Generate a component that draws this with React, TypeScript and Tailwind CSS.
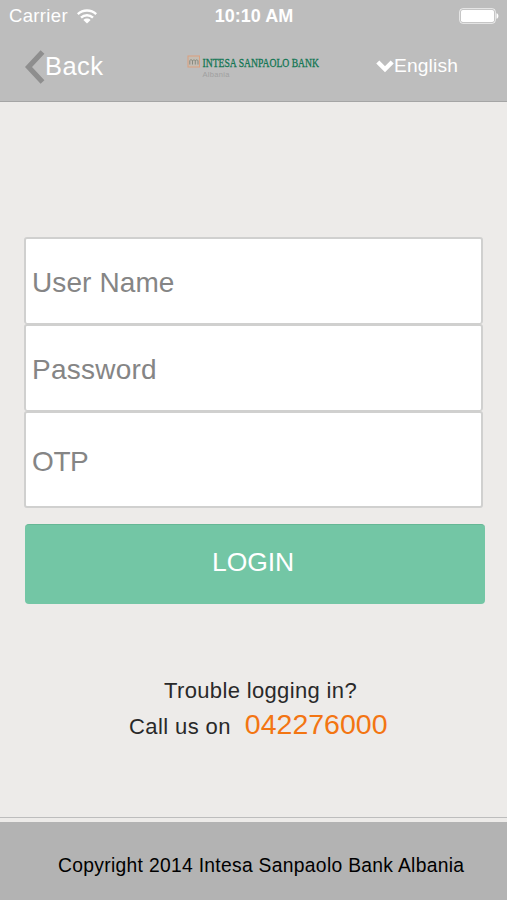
import React from 'react';

interface FieldProps {
    label: string;
    type?: string;
    className: string;
}

const Field: React.FC<FieldProps> = ({ label, type = 'text', className }) => (
    <input
        type={type}
        placeholder={label}
        aria-label={label}
        className={`block w-full rounded-[3px] border-2 border-[#d0d0cf] bg-white px-[6px] text-[28px] outline-none placeholder:text-[#858585] ${className}`}
    />
);

const StatusBar = () => (
    <div className="flex h-8 items-center text-white">
        <div className="flex flex-1 items-center pl-[9px]">
            <span className="text-[18.5px] tracking-[0.35px]">Carrier</span>
            <svg className="ml-[9px]" width="20" height="15" viewBox="0 0 20 15" fill="none" stroke="currentColor">
                <path d="M.8 5.1C6 .3 14 .3 19.2 5.1" strokeWidth="2.5" />
                <path d="M4 8.6C7.4 5.4 12.6 5.4 16 8.6" strokeWidth="2.5" />
                <path d="M10 14.5L6.4 11C8.5 9.1 11.5 9.1 13.6 11Z" fill="currentColor" stroke="none" />
            </svg>
        </div>
        <span className="pt-px text-[18px] font-bold">10:10 AM</span>
        <div className="flex flex-1 justify-end pr-[8px]">
            <svg width="40" height="16" viewBox="0 0 40 16">
                <rect x=".7" y=".7" width="35.6" height="14.6" rx="3" fill="none" stroke="white" strokeOpacity=".75" />
                <rect x="2" y="2" width="33" height="12" rx="1.8" fill="white" />
                <path d="M37.5 5.2C40 5.7 40 10.3 37.5 10.8Z" fill="white" />
            </svg>
        </div>
    </div>
);

const BankLogo = () => (
    <svg className="overflow-visible" width="136" height="26" viewBox="0 0 136 26">
        <rect x="1" y="2" width="11.5" height="11" fill="#c3bdb4" stroke="#dba07f" />
        <path d="M2.8 10.5V6.5C3.5 5.5 5 5.5 5.5 6.8V10.5M5.5 6.8C6.3 5.5 7.8 5.5 8.3 6.8V10.5M8.3 6.8C9 5.5 10.6 5.5 11 6.8V10.5" fill="none" stroke="#80857a" strokeWidth=".9" />
        <text x="15.5" y="12.5" fontFamily="Liberation Serif, serif" fontSize="11.8" fill="#127653" stroke="#127653" strokeWidth=".3" textLength="116.5" lengthAdjust="spacingAndGlyphs">
            INTESA SANPAOLO BANK
        </text>
        <text x="15.5" y="22.5" fontFamily="Liberation Sans, sans-serif" fontSize="7.5" fill="#a0a0a0" textLength="27">
            Albania
        </text>
    </svg>
);

const NavBar = () => (
    <div className="flex h-[69px] items-center text-white">
        <button className="flex w-[187px] items-center pl-[25px]">
            <svg width="20" height="34" viewBox="0 0 20 34" fill="none" stroke="#8e8e8e" strokeWidth="5.2">
                <path d="M17.5 2L3.5 17L17.5 32" />
            </svg>
            <span className="text-[25.5px] tracking-[0.4px]">Back</span>
        </button>
        <BankLogo />
        <button className="ml-[53px] flex items-center">
            <svg width="18" height="13" viewBox="0 0 18 13" fill="none" stroke="currentColor" strokeWidth="4.4">
                <path d="M1.8 2L9 9.2L16.2 2" />
            </svg>
            <span className="text-[19.2px] tracking-[0.15px]">English</span>
        </button>
    </div>
);

const App: React.FC = () => {
    return (
        <div className="flex h-[900px] w-[507px] flex-col overflow-hidden bg-[#edebe9] font-['Liberation_Sans',Arial,sans-serif]">
            <header className="h-[102px] border-b border-[#a5a5a5] bg-[#bdbdbd]">
                <StatusBar />
                <NavBar />
            </header>

            {/* Login form */}
            <main className="flex-1 pt-[135px]">
                <form className="ml-6" onSubmit={(e) => e.preventDefault()}>
                    <div className="w-[459px]">
                        <Field label="User Name" className="h-[87px] border-b pt-[4px] tracking-[0.1px]" />
                        <Field label="Password" type="password" className="h-[87px] border-b pt-[4px] tracking-[0.25px]" />
                        <Field label="OTP" className="h-[97px] pt-[5px] tracking-[-0.4px]" />
                    </div>
                    <button className="ml-px mt-4 block h-20 w-[460px] rounded-[4px] border-t border-[#66b795] bg-[#73c6a5] pr-1 pb-[3px] text-[26.5px] tracking-[-0.1px] text-white">
                        LOGIN
                    </button>
                </form>

                <div className="pt-[70px] text-[#292929]">
                    <p className="ml-[164px] text-[22px] leading-[34px] tracking-[0.35px]">Trouble logging in?</p>
                    <p className="-mt-[2px] ml-[129px] flex items-baseline leading-9">
                        <span className="text-[22px] tracking-[0.4px]">Call us on</span>
                        <a className="ml-[14px] text-[28.5px] text-[#f37512]">042276000</a>
                    </p>
                </div>
            </main>

            <footer className="border-t border-[#bdbdbd]">
                <div className="mt-[4px] h-[78px] bg-[#b3b3b3] pl-[58px] text-[19.3px] leading-[87px] tracking-[0.3px] whitespace-nowrap text-black">
                    Copyright 2014 Intesa Sanpaolo Bank Albania
                </div>
            </footer>
        </div>
    );
};

export default App;
